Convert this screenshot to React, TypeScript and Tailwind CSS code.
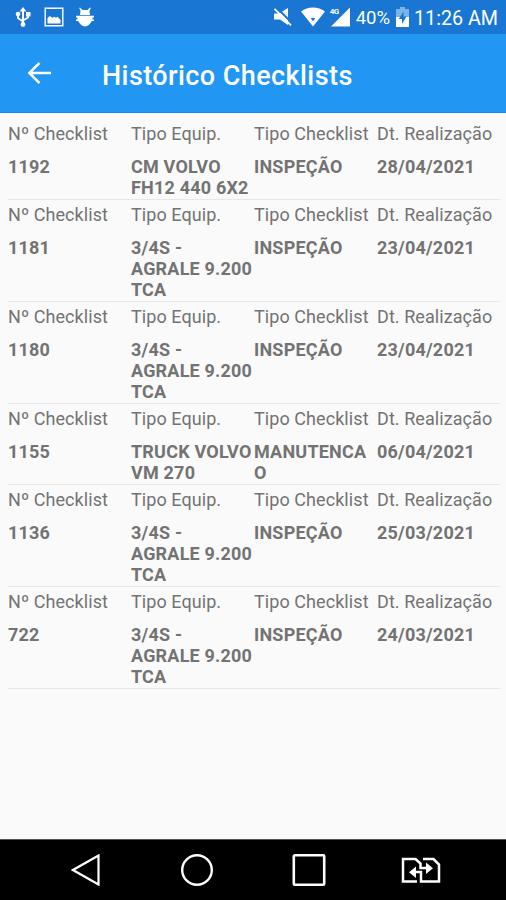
import React from 'react';

interface Checklist {
  id: string;
  equip: string;
  type: string;
  date: string;
}

const checklists: Checklist[] = [
  { id: '1192', equip: 'CM VOLVO\nFH12 440 6X2', type: 'INSPEÇÃO', date: '28/04/2021' },
  { id: '1181', equip: '3/4S -\nAGRALE 9.200\nTCA', type: 'INSPEÇÃO', date: '23/04/2021' },
  { id: '1180', equip: '3/4S -\nAGRALE 9.200\nTCA', type: 'INSPEÇÃO', date: '23/04/2021' },
  { id: '1155', equip: 'TRUCK VOLVO\nVM 270', type: 'MANUTENCA\nO', date: '06/04/2021' },
  { id: '1136', equip: '3/4S -\nAGRALE 9.200\nTCA', type: 'INSPEÇÃO', date: '25/03/2021' },
  { id: '722', equip: '3/4S -\nAGRALE 9.200\nTCA', type: 'INSPEÇÃO', date: '24/03/2021' },
];

const StatusBar = () => (
  <div className="flex h-[34px] shrink-0 items-center bg-[#1976d2] text-white">
    {/* USB */}
    <svg className="ml-[15px] h-5 w-4" viewBox="0 0 16 20" fill="none" stroke="currentColor" strokeWidth="2">
      <path d="M8 3v14M3 7v4l5 3.5M13 7v3.5L8 13.5" />
      <path d="M8 0l3.500 4.500h-7z" fill="currentColor" stroke="none" />
      <circle cx="8" cy="17.5" r="2.4" fill="currentColor" stroke="none" />
      <circle cx="3" cy="7" r="2.3" fill="currentColor" stroke="none" />
      <path d="M11 5h4.500v4.500H11z" fill="currentColor" stroke="none" />
    </svg>
    {/* Screenshot */}
    <svg className="ml-[13px] h-5 w-5" viewBox="0 0 20 20">
      <path d="M1.2 1.2h17.6v17.6H1.2z" fill="none" stroke="currentColor" strokeWidth="1.4" />
      <path d="M3.500 16.500V11l2.500-2 2.500 2L10 9.800l2 1 1.500-1 3 3v3.700z" fill="currentColor" />
    </svg>
    {/* Debug */}
    <svg className="ml-3 h-5 w-[18px]" viewBox="0 0 18 20" fill="currentColor">
      <path d="M4 .5L6.500 3h5L14 .5l.8.6L13.500 4l.5 4H4l.5-4-1.300-2.900z" />
      <path d="M0 8.800h18v1.700h-1.500v2H18v1.600h-2.200C14 17.500 11.700 19.500 9 19.500S4 17.500 2.200 14.100H0v-1.600h1.500v-2H0z" />
    </svg>

    {/* Sound off */}
    <svg className="ml-auto h-5 w-5" viewBox="0 0 20 20" fill="currentColor">
      <path d="M1 6.500h5L15 1v17l-8-5.500H1z" />
      <path d="M3.500 .5l17 17" stroke="#1976d2" strokeWidth="2" />
      <path d="M1.500 1.800l16.500 16.500" stroke="currentColor" strokeWidth="1.800" />
    </svg>
    <svg className="ml-2 h-5 w-6" viewBox="0 0 24 20" fill="currentColor">
      <path d="M0 4.500C7-1 17-1 24 4.500L12 19.500z" />
      <path d="M9.800 11.500q2.200-1.500 4.400 0L12 14.300z" fill="#1976d2" />
    </svg>
    <div className="ml-[5px] flex items-start">
      <span className="-mr-[8px] text-[8px] font-bold leading-[10px] tracking-[-0.5px]">4G</span>
      <svg className="h-5 w-5" viewBox="0 0 20 20" fill="currentColor">
        <path d="M19 .5v19H0z" />
      </svg>
    </div>
    <span className="ml-[5px] mt-[2px] text-[18.5px] leading-5">40%</span>
    <svg className="ml-[6px] h-5 w-[13px]" viewBox="0 0 13 20">
      <path d="M4 0h5v2h4v8H0V2h4z" fill="#7fb3e6" />
      <path d="M0 10h13v10H0z" fill="currentColor" />
      <path d="M7.500 4.500L2.800 12H6v5l4.500-7.500h-3z" fill="#1976d2" />
    </svg>
    <span className="ml-[5px] mr-[8px] mt-[3px] text-[19.7px] leading-5">11:26 AM</span>
  </div>
);

const Header = () => (
  <header className="flex h-[79px] shrink-0 items-center border-b border-[#148cf0] bg-[#2196f3] text-white">
    <svg className="ml-[27px] h-6 w-6" viewBox="0 0 24 24" fill="none" stroke="currentColor" strokeWidth="2.500">
      <path d="M24 12H3M12.500 1.800L2.300 12l10.200 10.200" />
    </svg>
    <h1 className="ml-[51px] mt-[5px] text-[27px] font-medium leading-8 tracking-[0.42px]">Histórico Checklists</h1>
  </header>
);

const ChecklistRow = ({ item }: { item: Checklist }) => (
  <li className="border-b border-[#e7e7e7] pb-px pt-[4px]">
    <div className="grid grid-cols-4 whitespace-nowrap tracking-[0.07px]">
      <span>Nº Checklist</span>
      <span>Tipo Equip.</span>
      <span>Tipo Checklist</span>
      <span>Dt. Realização</span>
    </div>
    <div className="mt-[12px] grid grid-cols-4 whitespace-pre font-bold tracking-[0.2px]">
      <span>{item.id}</span>
      <span>{item.equip}</span>
      <span>{item.type}</span>
      <span>{item.date}</span>
    </div>
  </li>
);

const NavBar = () => (
  <nav className="flex h-[61px] shrink-0 items-center border-t border-[#555] bg-black text-white">
    <svg className="ml-[71px] h-8 w-[30px]" viewBox="0 0 30 32" fill="none" stroke="currentColor" strokeWidth="2.200">
      <path d="M27.500 1.500v29L2 16z" />
    </svg>
    <svg className="ml-[80px] h-8 w-8" viewBox="0 0 32 32" fill="none" stroke="currentColor" strokeWidth="2.400">
      <circle cx="16" cy="16" r="14.800" />
    </svg>
    <svg className="ml-[79px] h-8 w-[34px]" viewBox="0 0 34 32" fill="none" stroke="currentColor" strokeWidth="2.600">
      <rect x="1.800" y="1.300" width="30.400" height="29.400" rx="1" />
    </svg>
    {/* Dual window */}
    <svg className="ml-[75px] h-[26px] w-[40px]" viewBox="0 0 40 26" fill="none" stroke="currentColor" strokeWidth="2.500">
      <path d="M16 24.500H2V2h12.500l5 4.500v4.500h9" />
      <path d="M22 2h10.500L38 7.500v17H20v-9.500H10" />
      <path d="M25 5.500l7 5.800-7 5.700zM15 9.500L8 15.200l7 5.800z" fill="currentColor" stroke="none" />
    </svg>
  </nav>
);

const App = () => {
  return (
    <div className="flex h-[900px] w-[506px] flex-col overflow-hidden bg-[#fafafa] font-[Roboto,sans-serif]">
      <StatusBar />
      <Header />
      <main className="flex-1 pl-2 pr-[6px] pt-[6px] text-[18px] leading-[21px] text-[#737373]">
        <ul>
          {checklists.map((item) => (
            <ChecklistRow key={item.id} item={item} />
          ))}
        </ul>
      </main>
      <NavBar />
    </div>
  );
};

export default App;
